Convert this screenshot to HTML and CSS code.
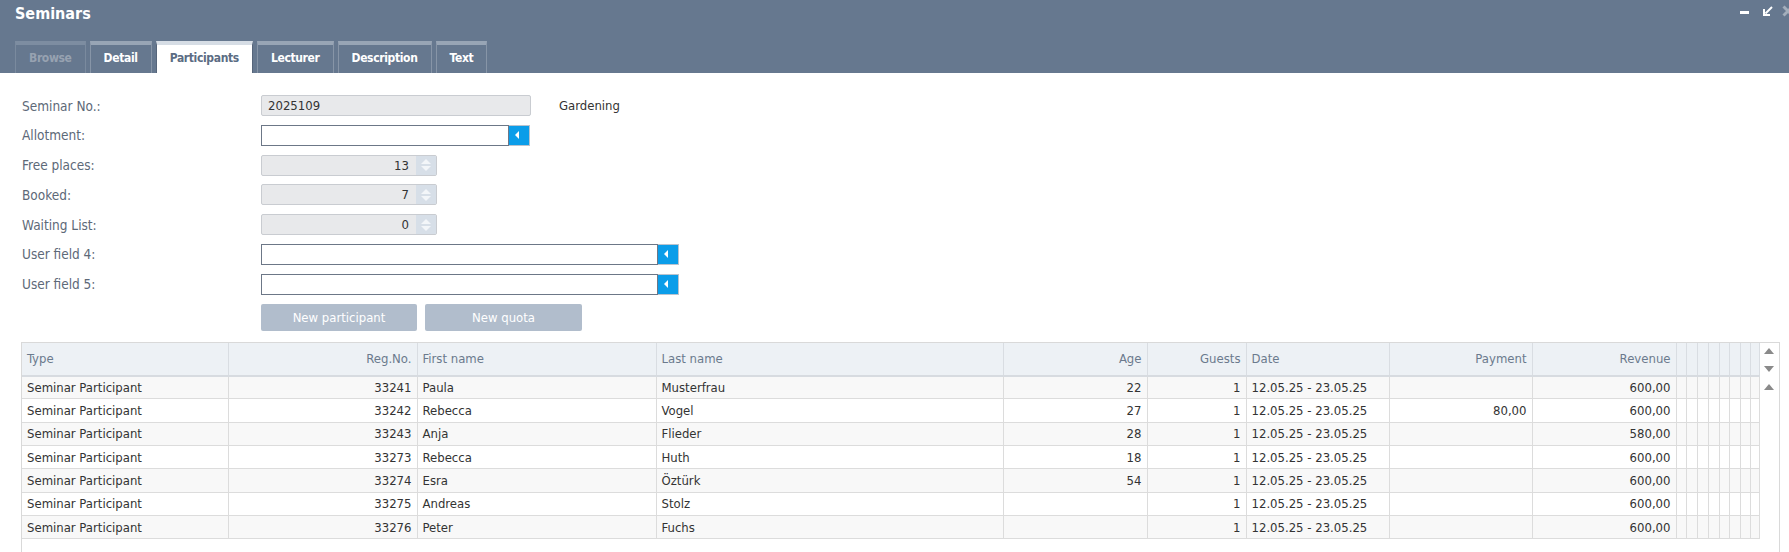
FILE: index.html
```html
<!DOCTYPE html>
<html>
<head>
<meta charset="utf-8">
<title>Seminars</title>
<link rel="stylesheet" href="styles.css">
</head>
<body>
<div class="titlebar">
  <div class="title">Seminars</div>
  <div class="controls">
    <span class="ctl-min"></span>
    <svg class="ctl-restore" width="10" height="10" viewBox="0 0 10 10"><path d="M9 1 L2.5 7.5" stroke="#fff" stroke-width="2" fill="none"/><path d="M1 3 V9 H7" stroke="#fff" stroke-width="2" fill="none"/></svg>
    <svg class="ctl-close" width="12" height="12" viewBox="0 0 12 12"><path d="M1.5 1.5 L10.5 10.5 M10.5 1.5 L1.5 10.5" stroke="#a3aebb" stroke-width="3" fill="none"/></svg>
  </div>
  <div class="tabs">
    <div class="tab disabled">Browse</div>
    <div class="tab">Detail</div>
    <div class="tab active">Participants</div>
    <div class="tab">Lecturer</div>
    <div class="tab">Description</div>
    <div class="tab">Text</div>
  </div>
</div>

<div class="form">
  <div class="label">Seminar No.:</div>
  <div class="field"><div class="ro w-seminar">2025109</div><span class="extra">Gardening</span></div>

  <div class="label">Allotment:</div>
  <div class="field"><div class="edit w-allot"></div><div class="pick"><span class="tri-left"></span></div></div>

  <div class="label">Free places:</div>
  <div class="field"><div class="spin"><div class="spin-val">13</div><div class="spin-btns"><span class="tri-up"></span><span class="tri-down"></span></div></div></div>

  <div class="label">Booked:</div>
  <div class="field"><div class="spin"><div class="spin-val">7</div><div class="spin-btns"><span class="tri-up"></span><span class="tri-down"></span></div></div></div>

  <div class="label">Waiting List:</div>
  <div class="field"><div class="spin"><div class="spin-val">0</div><div class="spin-btns"><span class="tri-up"></span><span class="tri-down"></span></div></div></div>

  <div class="label">User field 4:</div>
  <div class="field"><div class="edit w-user"></div><div class="pick"><span class="tri-left"></span></div></div>

  <div class="label">User field 5:</div>
  <div class="field"><div class="edit w-user"></div><div class="pick"><span class="tri-left"></span></div></div>

  <div class="label"></div>
  <div class="buttons"><div class="btn w-btn1">New participant</div><div class="btn w-btn2">New quota</div></div>
</div>

<div class="grid-box">
  <table class="grid">
    <colgroup>
      <col class="c-type"><col class="c-reg"><col class="c-first"><col class="c-last"><col class="c-age"><col class="c-guests"><col class="c-date"><col class="c-pay"><col class="c-rev">
      <col class="c-n10"><col class="c-n11"><col class="c-n11"><col class="c-n11"><col class="c-n10"><col class="c-n11"><col class="c-n10"><col class="c-n9">
    </colgroup>
    <thead>
      <tr>
        <th>Type</th><th class="r">Reg.No.</th><th>First name</th><th>Last name</th><th class="r">Age</th><th class="r">Guests</th><th>Date</th><th class="r">Payment</th><th class="r">Revenue</th>
        <th></th><th></th><th></th><th></th><th></th><th></th><th></th><th></th>
      </tr>
    </thead>
    <tbody>
      <tr><td>Seminar Participant</td><td class="r">33241</td><td>Paula</td><td>Musterfrau</td><td class="r">22</td><td class="r">1</td><td>12.05.25 - 23.05.25</td><td class="r"></td><td class="r">600,00</td><td></td><td></td><td></td><td></td><td></td><td></td><td></td><td></td></tr>
      <tr><td>Seminar Participant</td><td class="r">33242</td><td>Rebecca</td><td>Vogel</td><td class="r">27</td><td class="r">1</td><td>12.05.25 - 23.05.25</td><td class="r">80,00</td><td class="r">600,00</td><td></td><td></td><td></td><td></td><td></td><td></td><td></td><td></td></tr>
      <tr><td>Seminar Participant</td><td class="r">33243</td><td>Anja</td><td>Flieder</td><td class="r">28</td><td class="r">1</td><td>12.05.25 - 23.05.25</td><td class="r"></td><td class="r">580,00</td><td></td><td></td><td></td><td></td><td></td><td></td><td></td><td></td></tr>
      <tr><td>Seminar Participant</td><td class="r">33273</td><td>Rebecca</td><td>Huth</td><td class="r">18</td><td class="r">1</td><td>12.05.25 - 23.05.25</td><td class="r"></td><td class="r">600,00</td><td></td><td></td><td></td><td></td><td></td><td></td><td></td><td></td></tr>
      <tr><td>Seminar Participant</td><td class="r">33274</td><td>Esra</td><td>Öztürk</td><td class="r">54</td><td class="r">1</td><td>12.05.25 - 23.05.25</td><td class="r"></td><td class="r">600,00</td><td></td><td></td><td></td><td></td><td></td><td></td><td></td><td></td></tr>
      <tr><td>Seminar Participant</td><td class="r">33275</td><td>Andreas</td><td>Stolz</td><td class="r"></td><td class="r">1</td><td>12.05.25 - 23.05.25</td><td class="r"></td><td class="r">600,00</td><td></td><td></td><td></td><td></td><td></td><td></td><td></td><td></td></tr>
      <tr><td>Seminar Participant</td><td class="r">33276</td><td>Peter</td><td>Fuchs</td><td class="r"></td><td class="r">1</td><td>12.05.25 - 23.05.25</td><td class="r"></td><td class="r">600,00</td><td></td><td></td><td></td><td></td><td></td><td></td><td></td><td></td></tr>
    </tbody>
  </table>
  <div class="scrollcol">
    <span class="s-up"></span>
    <span class="s-down"></span>
    <span class="s-up"></span>
  </div>
</div>
</body>
</html>
```

FILE: styles.css
```css
* { box-sizing: border-box; }
html, body { margin: 0; padding: 0; }
body {
  width: 1789px;
  height: 552px;
  overflow: hidden;
  background: #fff;
  font-family: "DejaVu Sans Condensed", "DejaVu Sans", sans-serif;
  font-size: 13px;
  color: #333;
}

/* title bar */
.titlebar {
  background: #66788f;
  height: 73px;
  padding-left: 15px;
  position: relative;
}
.title {
  height: 29px;
  line-height: 28px;
  font-size: 16px;
  font-weight: bold;
  color: #fff;
}
.controls {
  position: absolute;
  top: 0;
  left: 1740px;
  height: 24px;
  width: 49px;
  overflow: hidden;
}
.ctl-min {
  position: absolute;
  left: 0;
  top: 11px;
  width: 9px;
  height: 3px;
  background: #fff;
}
.ctl-restore { position: absolute; left: 23px; top: 6px; }
.ctl-close { position: absolute; left: 42px; top: 5px; }

.tabs {
  display: flex;
  gap: 4px;
  margin-top: 12px;
  height: 32px;
}
.tab {
  height: 32px;
  padding: 0 13px;
  border-left: 1px solid #8795a7;
  border-right: 1px solid #8795a7;
  border-bottom: none;
  border-top: 4px solid #98a5b5;
  color: #fff;
  font-weight: bold;
  font-size: 12px;
  letter-spacing: -0.35px;
  line-height: 27px;
}
.tab.disabled {
  color: #97a2b1;
  border-left-color: #7a8a9e;
  border-right-color: #7a8a9e;
  border-top-color: #7d8da1;
}
.tab.active {
  background: #fff;
  color: #5b6c83;
  border-left-color: #56657a;
  border-right-color: #56657a;
  border-top-color: #d6dde5;
}

/* form */
.form {
  padding: 22px 0 0 22px;
  display: grid;
  grid-template-columns: 239px auto;
  row-gap: 8.8px;
  align-items: center;
  justify-items: start;
}
.label { color: #5d6978; font-size: 13.5px; }
.field {
  display: flex;
  align-items: center;
  height: 21px;
}
.ro {
  height: 21px;
  background: #e8e9eb;
  border: 1px solid #c9ccd1;
  border-radius: 2px;
  padding-left: 6px;
  line-height: 19px;
  color: #333;
}
.w-seminar { width: 270px; }
.extra { margin-left: 28px; color: #333; }
.edit {
  height: 21px;
  background: #fff;
  border: 1px solid #6c7787;
}
.w-allot { width: 248px; }
.w-user { width: 397px; }
.pick {
  width: 21px;
  height: 21px;
  background: #0b9de9;
  border: 1px solid #b9c3ce;
  border-left: none;
  display: flex;
  align-items: center;
  padding-left: 6px;
}
.tri-left {
  width: 0;
  height: 0;
  border-top: 4px solid transparent;
  border-bottom: 4px solid transparent;
  border-right: 4px solid #fff;
}
.spin {
  width: 176px;
  height: 21px;
  display: flex;
  border: 1px solid #c9ccd1;
  border-radius: 2px;
  background: #e8e9eb;
  overflow: hidden;
}
.spin-val {
  flex: 1;
  text-align: right;
  padding-right: 7px;
  line-height: 19px;
  color: #333;
}
.spin-btns {
  width: 20px;
  background: #d7dfe8;
  display: flex;
  flex-direction: column;
  align-items: center;
  justify-content: center;
  gap: 2px;
}
.tri-up {
  width: 0; height: 0;
  border-left: 5px solid transparent;
  border-right: 5px solid transparent;
  border-bottom: 5px solid #f3f6f9;
}
.tri-down {
  width: 0; height: 0;
  border-left: 5px solid transparent;
  border-right: 5px solid transparent;
  border-top: 5px solid #f3f6f9;
}
.buttons { display: flex; gap: 8px; }
.btn {
  height: 27px;
  line-height: 27px;
  background: #b1bdcc;
  color: #fff;
  text-align: center;
  border-radius: 2px;
}
.w-btn1 { width: 156px; }
.w-btn2 { width: 157px; }

/* grid */
.grid-box {
  margin: 11px 9px 0 21px;
  height: 300px;
  border: 1px solid #d9d9d9;
  display: flex;
  align-items: flex-start;
}
.grid {
  width: 1737px;
  table-layout: fixed;
  border-collapse: collapse;
}
.c-type { width: 206px; }
.c-reg { width: 189px; }
.c-first { width: 239px; }
.c-last { width: 347px; }
.c-age { width: 144px; }
.c-guests { width: 99px; }
.c-date { width: 143px; }
.c-pay { width: 143px; }
.c-rev { width: 144px; }
.c-n9 { width: 9px; }
.c-n10 { width: 10px; }
.c-n11 { width: 11px; }
.grid th {
  height: 33px;
  background: #edf1f5;
  color: #6b7a8d;
  font-weight: normal;
  text-align: left;
  padding: 0 5px;
  border-right: 1px solid #d9dde2;
  border-bottom: 2px solid #d7dbe0;
  white-space: nowrap;
  overflow: hidden;
}
.grid td {
  height: 23.3px;
  padding: 0 5px;
  border-right: 1px solid #dcdcdc;
  border-bottom: 1px solid #dcdcdc;
  white-space: nowrap;
  overflow: hidden;
  color: #333;
}
.grid th:nth-child(n+10), .grid td:nth-child(n+10) { padding: 0; }
.grid tbody tr:nth-child(odd) td { background: #f8f8f8; }
.grid tbody tr:nth-child(even) td { background: #fff; }
.grid .r { text-align: right; }
.scrollcol {
  width: 20px;
  display: flex;
  flex-direction: column;
  align-items: center;
  padding-top: 5px;
  gap: 12px;
}
.s-up {
  width: 0; height: 0;
  border-left: 5px solid transparent;
  border-right: 5px solid transparent;
  border-bottom: 6px solid #8a8a8a;
}
.s-down {
  width: 0; height: 0;
  border-left: 5px solid transparent;
  border-right: 5px solid transparent;
  border-top: 6px solid #8a8a8a;
}
```
